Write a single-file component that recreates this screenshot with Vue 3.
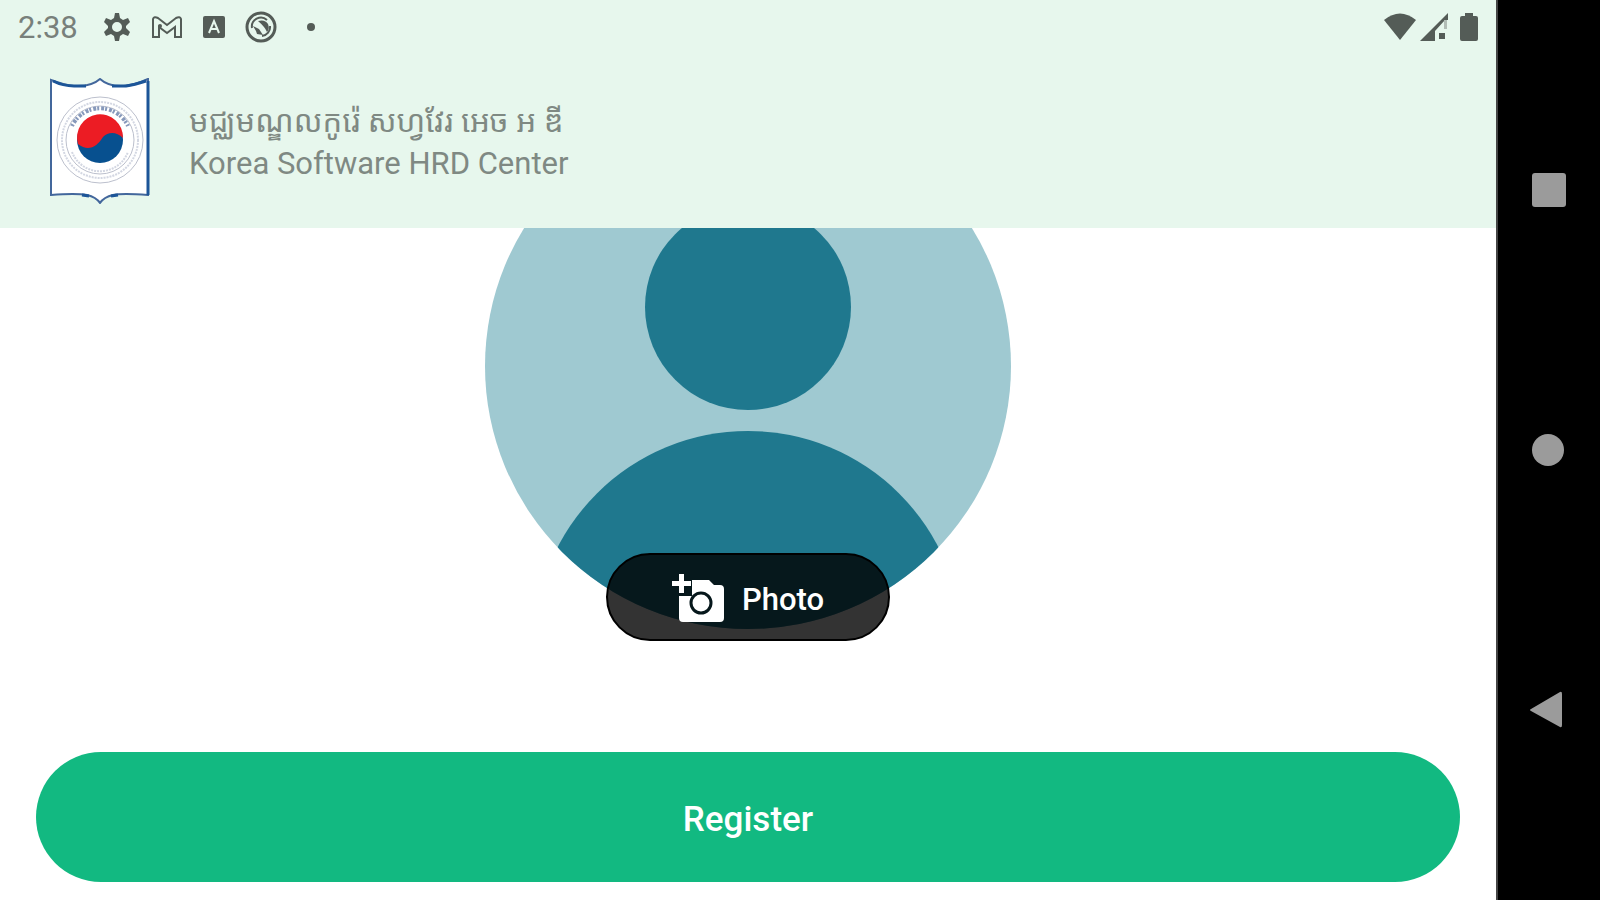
<template>
    <div class="device">
        <div class="screen">
            <div class="status-bar">
                <div class="status-left">
                    <span class="time">{{ time }}</span>
                    <svg class="icon gear" viewBox="0 0 28 28">
                        <path fill-rule="evenodd" d="M12 0h4l1 5 3 2 5-2 2 4-4 4v2l4 4-2 4-5-2-3 2-1 5h-4l-1-5-3-2-5 2-2-4 4-4v-2L1 9l2-4 5 2 3-2zM14 9a5 5 0 1 0 0 10a5 5 0 1 0 0-10z"/>
                    </svg>
                    <svg class="icon gmail" viewBox="0 0 32 24">
                        <path class="line" d="M2 22V4q1-3 5-1l9 7 9-7q4-2 5 1v18h-6V12l-8 6-8-6v10z"/>
                        <circle cx="9" cy="11" r="2"/>
                    </svg>
                    <svg class="icon letter" viewBox="0 0 22 22">
                        <rect width="22" height="22" rx="2"/>
                        <path class="cut" d="M6 17L11 5l5 12M8 13h6"/>
                    </svg>
                    <svg class="icon sync" viewBox="0 0 32 32">
                        <circle class="line thick" cx="16" cy="16" r="14"/>
                        <path class="line" d="M7 17a9 9 0 0 1 15-8M25 15a9 9 0 0 1-8 10"/>
                        <path d="M13 10q7-2 10 3 2 5-1 8-2-5-9-11zM8 15l6 3 4 6-6-1-1-3z"/>
                    </svg>
                    <span class="more"></span>
                </div>
                <div class="status-right">
                    <svg class="icon wifi" viewBox="0 0 32 28">
                        <path d="M0 7Q16-6 32 7L16 27z"/>
                    </svg>
                    <svg class="icon signal" viewBox="0 0 28 28">
                        <path d="M0 28L28 0v7h-3L15 18v10z"/>
                        <path class="faint" d="M24 7h3v9h-3z"/>
                        <path d="M19 20h6v6h-6z"/>
                    </svg>
                    <svg class="icon battery" viewBox="0 0 18 28">
                        <path d="M5 0h8v3h3q2 0 2 2v21q0 2-2 2H2q-2 0-2-2V5q0-2 2-2h3z"/>
                    </svg>
                </div>
            </div>

            <header class="header">
                <svg class="logo" viewBox="0 0 100 126">
                    <path class="shield" d="M1 2Q14 7 24 8Q41 9 50 1Q59 9 74 8Q85 7 98 1V117Q72 115 63 117Q54 119 50 125Q46 119 37 117Q26 115 1 117z"/>
                    <path class="shield-edge" d="M3 3Q13 8 24 8H36M62 8H76Q84 7 96 3M98 3V117M32 117l7 1M61 118l7-1"/>
                    <circle class="ring" cx="50" cy="62" r="43"/>
                    <circle class="ring dashed" cx="50" cy="62" r="38"/>
                    <circle class="ring" cx="50" cy="62" r="34"/>
                    <path class="marks" d="M22 48A31 31 0 0 1 78 48"/>
                    <path class="ring dashed" d="M22 74A30 30 0 0 0 78 74"/>
                    <circle class="blue" cx="50" cy="62" r="23"/>
                    <path class="red" d="M28 66A23 23 0 1 1 73 60C66 53 58 54 53 59C47 69 38 74 28 66z"/>
                </svg>
                <div class="titles">
                    <p lang="km">{{ titleKm }}</p>
                    <p>{{ titleEn }}</p>
                </div>
            </header>

            <main class="content">
                <div class="profile">
                    <svg class="avatar" viewBox="0 0 526 526">
                        <defs>
                            <clipPath id="avatar-clip">
                                <circle cx="263" cy="263" r="263"/>
                            </clipPath>
                        </defs>
                        <g clip-path="url(#avatar-clip)">
                            <rect class="avatar-bg" width="526" height="526"/>
                            <circle class="avatar-body" cx="263" cy="204" r="103"/>
                            <circle class="avatar-body" cx="263" cy="542" r="214"/>
                        </g>
                    </svg>
                    <button class="photo" type="button">
                        <svg class="camera" viewBox="0 0 52 50">
                            <path d="M8 22h12v-8h6V6h11l5 5h6q4 0 4 4v29q0 4-4 4H11q-4 0-4-4V22z"/>
                            <path d="M20 6h8v8h-8z"/>
                            <circle class="lens" cx="29" cy="29" r="10"/>
                            <path class="plus" d="M7 0h5v7h7v5h-7v7H7v-7H0V7h7z"/>
                        </svg>
                        <span>Photo</span>
                    </button>
                </div>
                <button class="register" type="button">Register</button>
            </main>
        </div>

        <nav class="nav-bar">
            <button type="button" aria-label="Recent apps">
                <svg viewBox="0 0 40 40"><rect x="4" y="3" width="34" height="34" rx="3"/></svg>
            </button>
            <button type="button" aria-label="Home">
                <svg viewBox="0 0 40 40"><circle cx="20" cy="20" r="16"/></svg>
            </button>
            <button type="button" aria-label="Back">
                <svg viewBox="0 0 40 40"><path d="M3 19L32 2q2-1 2 2v31q0 3-2 2L3 21q-2-1 0-2z"/></svg>
            </button>
        </nav>
    </div>
</template>

<script setup>
    const time = '2:38';
    const titleKm = 'មជ្ឈមណ្ឌលកូរ៉េ សហ្វវែរ អេច អ ឌី';
    const titleEn = 'Korea Software HRD Center';
</script>

<style>
    body{
        margin: 0;
        background-color: #fff;
    }
</style>

<style scoped>
    .device{
        display: flex;
        height: 100vh;
        font-family: Roboto, "Noto Sans Khmer", "Noto Sans", sans-serif;
    }

    .screen{
        flex: 1;
        min-width: 0;
        display: flex;
        flex-direction: column;
    }

    button{
        border: none;
        padding: 0;
        font-family: inherit;
        cursor: pointer;
    }

    .status-bar{
        height: 54px;
        padding: 0 18px;
        display: flex;
        align-items: center;
        justify-content: space-between;
        background-color: #e7f7ed;
    }

    .status-left, .status-right{
        display: flex;
        align-items: center;
    }

    .status-left{
        gap: 20px;
    }

    .status-right{
        gap: 4px;
    }

    .time{
        font-size: 31px;
        color: #78807b;
        margin-right: 5px;
    }

    .icon{
        display: block;
        height: 28px;
        fill: #545c57;
    }

    .icon .line{
        fill: none;
        stroke: #545c57;
        stroke-width: 2;
    }

    .icon .thick{
        stroke-width: 3;
    }

    .icon .cut{
        fill: none;
        stroke: #e7f7ed;
        stroke-width: 2;
    }

    .icon .faint{
        fill: #b2bdb6;
    }

    .icon.gmail{
        height: 24px;
    }

    .icon.letter{
        height: 22px;
    }

    .icon.sync{
        height: 32px;
    }

    .battery{
        margin-left: 8px;
    }

    .more{
        width: 8px;
        height: 8px;
        margin-left: 10px;
        border-radius: 50%;
        background-color: #545c57;
    }

    .header{
        height: 174px;
        padding: 0 50px;
        display: flex;
        align-items: center;
        gap: 39px;
        background-color: #e7f7ed;
    }

    .logo{
        width: 100px;
        height: 126px;
    }

    .shield{
        fill: #fff;
        stroke: #43679c;
        stroke-width: 2;
    }

    .shield-edge{
        fill: none;
        stroke: #1c5598;
        stroke-width: 3;
    }

    .ring{
        fill: none;
        stroke: #bcc0cd;
        stroke-width: 1;
    }

    .dashed{
        stroke-width: 2;
        stroke-dasharray: 2 1;
        stroke: #d3d7e2;
    }

    .marks{
        fill: none;
        stroke: #8799bb;
        stroke-width: 4;
        stroke-dasharray: 2 2 3 1;
    }

    .blue{
        fill: #07508f;
    }

    .red{
        fill: #ec1c24;
    }

    .titles{
        padding-top: 4px;
    }

    .titles p{
        margin: 0;
        font-size: 31px;
        line-height: 42px;
        color: #7f8983;
    }

    .content{
        flex: 1;
        min-height: 0;
        padding: 0 36px 18px;
        display: flex;
        flex-direction: column;
        align-items: center;
        justify-content: flex-end;
        overflow: hidden;
        background-color: #fff;
    }

    .profile{
        position: relative;
        flex-shrink: 0;
        margin-bottom: 123px;
    }

    .avatar{
        display: block;
        width: 526px;
        height: 526px;
    }

    .avatar-bg{
        fill: #9fc9d1;
    }

    .avatar-body{
        fill: #1f788e;
    }

    /* sits over the lower edge of the avatar */
    .photo{
        position: absolute;
        left: 50%;
        bottom: -12px;
        transform: translateX(-50%);
        box-sizing: border-box;
        width: 284px;
        height: 88px;
        padding-top: 4px;
        border: 2px solid #000;
        border-radius: 44px;
        display: flex;
        align-items: center;
        justify-content: center;
        gap: 18px;
        background-color: rgba(0, 0, 0, 0.8);
        color: #fff;
        font-size: 31px;
        font-weight: 500;
    }

    .camera{
        width: 52px;
        height: 50px;
        fill: #fff;
    }

    .lens{
        stroke: #06171b;
        stroke-width: 3;
    }

    .plus{
        stroke: #06171b;
        stroke-width: 2;
        paint-order: stroke;
    }

    .register{
        flex-shrink: 0;
        width: 100%;
        height: 130px;
        padding-top: 4px;
        border-radius: 65px;
        background-color: #12b981;
        color: #fff;
        font-size: 35px;
        font-weight: 500;
    }

    .nav-bar{
        width: 100px;
        padding-right: 2px;
        border-left: 2px solid #444;
        display: flex;
        flex-direction: column;
        align-items: center;
        justify-content: center;
        gap: 220px;
        background-color: #000;
    }

    .nav-bar button{
        width: 40px;
        height: 40px;
        background: none;
    }

    .nav-bar svg{
        display: block;
        fill: #9b9b9b;
    }
</style>
